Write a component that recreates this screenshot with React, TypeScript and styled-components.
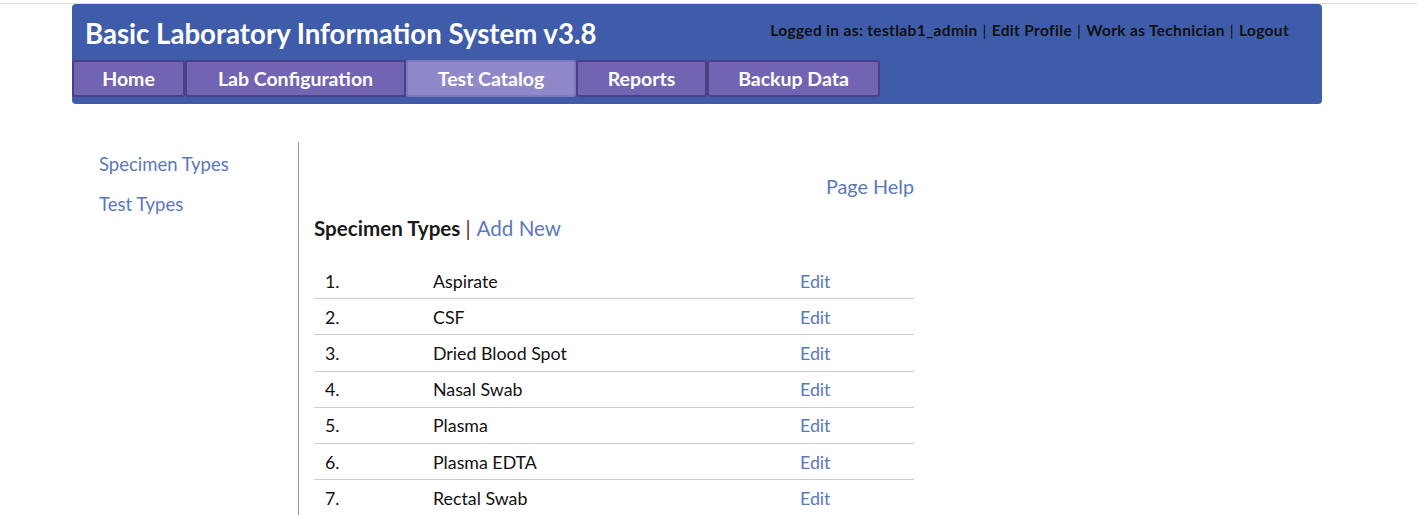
import React from "react";
import styled, { createGlobalStyle } from "styled-components";

const GlobalStyle = createGlobalStyle`
  html, body { margin: 0; padding: 0; background: #fff; }
  body { font-family: Lato, "Open Sans", sans-serif; color: #1a1a1a; }
  a { text-decoration: none; }
`;

const Page = styled.div`
  padding-top: 3px;
`;

const Frame = styled.div`
  border-top: 1px solid #dcdcdc;
`;

const Header = styled.header`
  margin-left: 72px;
  width: 1250px;
  height: 100px;
  box-sizing: border-box;
  background: #3f5caa;
  border-radius: 4px;
  display: flex;
  flex-direction: column;
`;

const TitleRow = styled.div`
  height: 56px;
  display: flex;
  align-items: center;
  justify-content: space-between;
  padding: 0 33px 0 13px;
`;

const Title = styled.h1`
  margin: 0;
  font-size: 27.6px;
  font-weight: 700;
  color: #fff;
  padding-top: 2px;
`;

const UserBar = styled.div`
  font-size: 15.5px;
  font-weight: 700;
  letter-spacing: 0.33px;
  color: #111;
  padding-bottom: 5px;
`;

const Sep = styled.span`
  font-weight: 400;
  margin: 0 5px;
`;

const NavRow = styled.nav`
  display: flex;
  height: 37px;
`;

const Tab = styled.div<{ $active?: boolean; $w: number }>`
  width: ${(p) => p.$w}px;
  box-sizing: border-box;
  height: 37px;
  display: flex;
  align-items: center;
  justify-content: center;
  background: ${(p) => (p.$active ? "#8f89c9" : "#7264b2")};
  border: 2px solid ${(p) => (p.$active ? "#7f78bd" : "#4d3f88")};
  border-radius: 3px;
  color: #fff;
  font-size: 19.5px;
  font-weight: 700;
`;

const Main = styled.div`
  display: flex;
  margin-top: 38px;
  margin-left: 72px;
`;

const Sidebar = styled.aside`
  width: 227px;
  box-sizing: border-box;
  padding: 11px 0 0 27px;
  border-right: 1px solid #9a9a9a;
  min-height: 380px;
  display: flex;
  flex-direction: column;
  gap: 17px;
`;

const SideLink = styled.a`
  color: #5b78bd;
  font-size: 18.5px;
  line-height: 23px;
`;

const Content = styled.section`
  width: 600px;
  margin-left: 15px;
  padding-top: 32px;
`;

const HelpRow = styled.div`
  display: flex;
  justify-content: flex-end;
`;

const HelpLink = styled.a`
  color: #5b78bd;
  font-size: 19.8px;
  line-height: 24px;
`;

const Heading = styled.div`
  margin-top: 18px;
  font-size: 20.6px;
  line-height: 24px;
  font-weight: 700;
  color: #1a1a1a;
`;

const Pipe = styled.span`
  color: #6a1f1f;
  font-weight: 400;
  margin: 0 6px 0 5px;
`;

const AddLink = styled.a`
  color: #5b78bd;
  font-weight: 400;
`;

const Table = styled.div`
  margin-top: 23px;
`;

const Row = styled.div<{ $last?: boolean }>`
  display: grid;
  grid-template-columns: 108px 367px 1fr;
  height: 36.2px;
  box-sizing: border-box;
  align-items: center;
  border-bottom: ${(p) => (p.$last ? "none" : "1px solid #cccccc")};
  font-size: 17.8px;
  padding-left: 11px;
`;

const Cell = styled.span`
  color: #111;
`;

const EditLink = styled.a`
  color: #5b78bd;
`;

const tabs = [
  { label: "Home", w: 113 },
  { label: "Lab Configuration", w: 221 },
  { label: "Test Catalog", w: 170, active: true },
  { label: "Reports", w: 131 },
  { label: "Backup Data", w: 173 },
];

const specimens = [
  "Aspirate",
  "CSF",
  "Dried Blood Spot",
  "Nasal Swab",
  "Plasma",
  "Plasma EDTA",
  "Rectal Swab",
];

export default function App() {
  return (
    <Page>
      <GlobalStyle />
      <Frame>
        <Header>
          <TitleRow>
            <Title>Basic Laboratory Information System v3.8</Title>
            <UserBar>
              Logged in as: testlab1_admin<Sep>|</Sep>Edit Profile<Sep>|</Sep>
              Work as Technician<Sep>|</Sep>Logout
            </UserBar>
          </TitleRow>
          <NavRow>
            {tabs.map((t) => (
              <Tab key={t.label} $w={t.w} $active={t.active}>
                {t.label}
              </Tab>
            ))}
          </NavRow>
        </Header>
        <Main>
          <Sidebar>
            <SideLink href="#">Specimen Types</SideLink>
            <SideLink href="#">Test Types</SideLink>
          </Sidebar>
          <Content>
            <HelpRow>
              <HelpLink href="#">Page Help</HelpLink>
            </HelpRow>
            <Heading>
              Specimen Types<Pipe>|</Pipe>
              <AddLink href="#">Add New</AddLink>
            </Heading>
            <Table>
              {specimens.map((s, i) => (
                <Row key={s} $last={i === specimens.length - 1}>
                  <Cell>{i + 1}.</Cell>
                  <Cell>{s}</Cell>
                  <EditLink href="#">Edit</EditLink>
                </Row>
              ))}
            </Table>
          </Content>
        </Main>
      </Frame>
    </Page>
  );
}
